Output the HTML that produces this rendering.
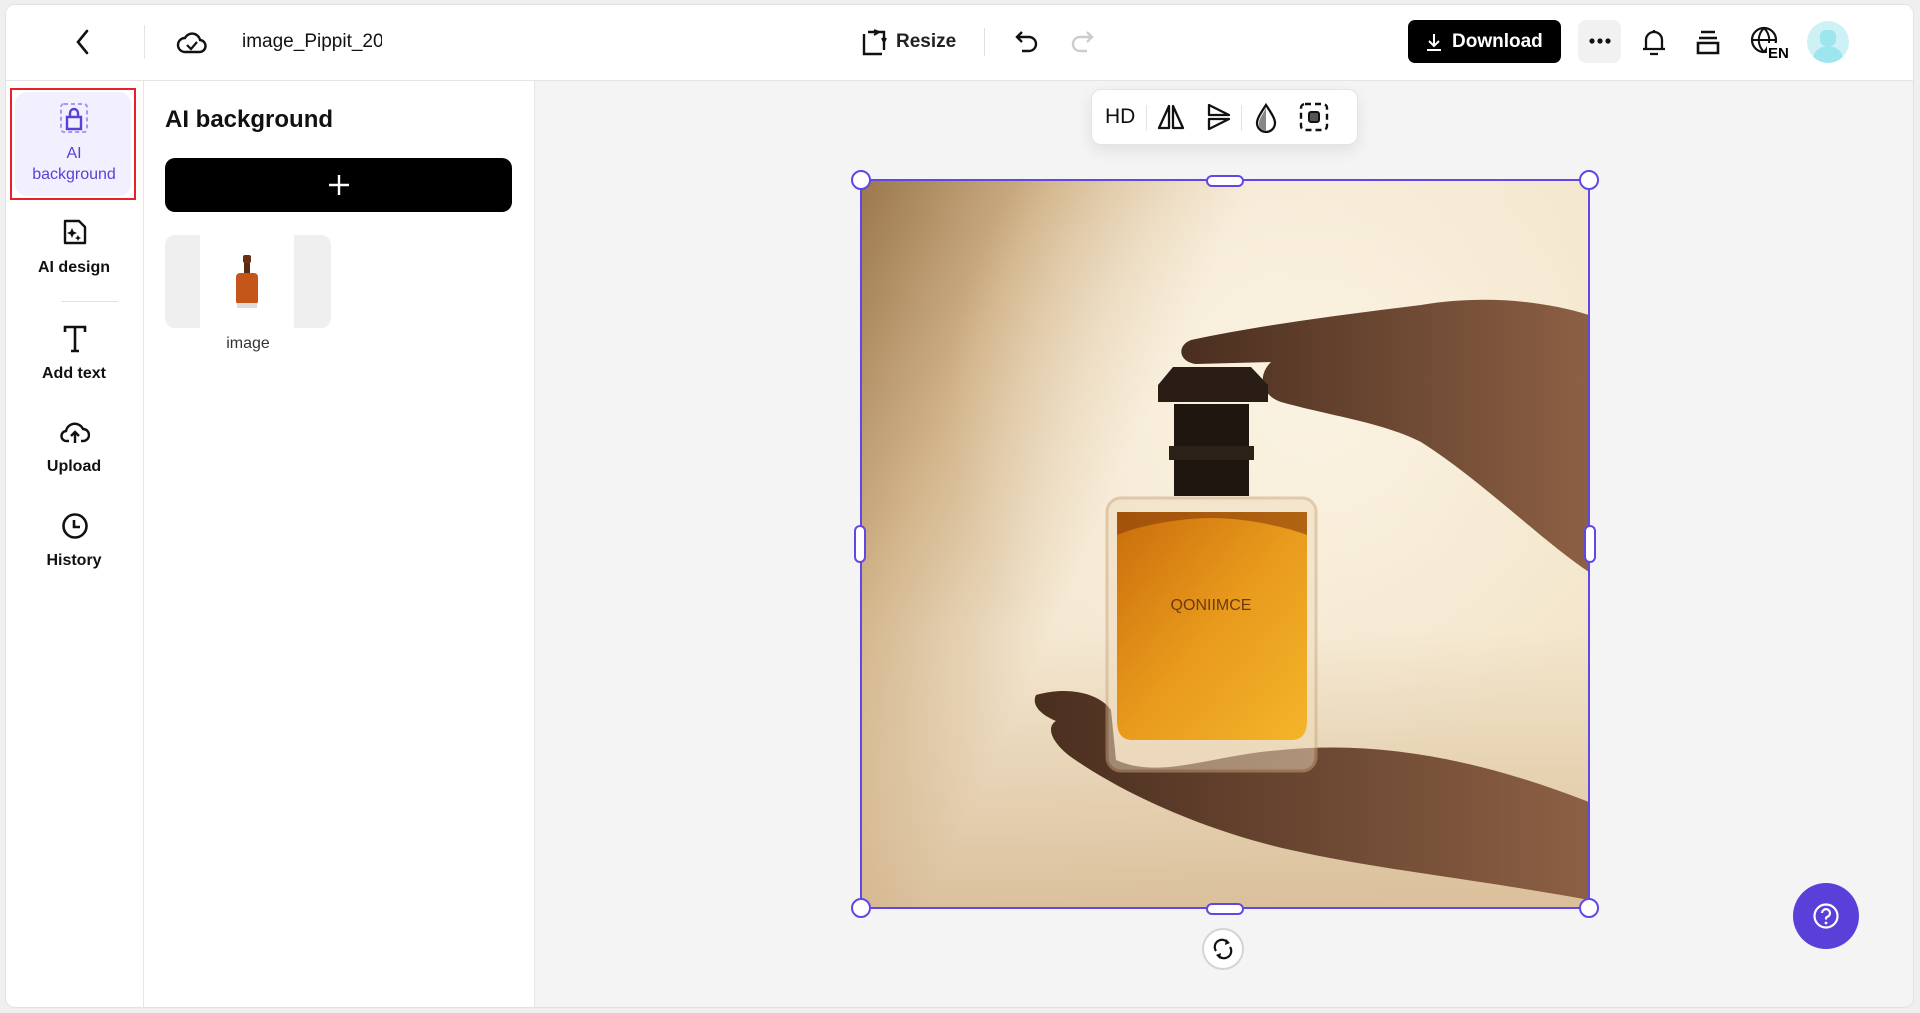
<!DOCTYPE html>
<html><head><meta charset="utf-8"><style>
*{box-sizing:border-box;margin:0;padding:0}
body{width:1920px;height:1013px;background:#efefef;font-family:"Liberation Sans",Arial,sans-serif;position:relative;overflow:hidden;color:#111}
.frame{position:absolute;left:5px;top:4px;width:1909px;height:1004px;background:#fff;border:1px solid #e2e2e2;border-radius:10px;overflow:hidden}
.abs{position:absolute}
.hdr{left:0;top:0;width:100%;height:76px;border-bottom:1px solid #e4e4e4;background:#fff}
.nav{left:0;top:76px;width:138px;bottom:0;border-right:1px solid #e6e6e6}
.panel{left:138px;top:76px;width:391px;bottom:0;border-right:1px solid #e6e6e6}
.canvas{left:529px;top:76px;right:0;bottom:0;background:#f4f4f4}
.lbl{position:absolute;left:0;width:138px;text-align:center;font-size:16px;font-weight:bold}
svg{display:block}
</style></head><body>
<div class="frame">
 <div class="abs hdr">
  <svg class="abs" style="left:67px;top:22px" width="20" height="30" viewBox="0 0 20 30"><path d="M14 4 L5 15 L14 26" fill="none" stroke="#111" stroke-width="2.6" stroke-linecap="round"/></svg>
  <div class="abs" style="left:138px;top:20px;width:1px;height:34px;background:#e4e4e4"></div>
  <svg class="abs" style="left:170px;top:22px" width="32" height="30" viewBox="0 0 32 30"><path d="M9 25 H23 A6 6 0 0 0 24 13 A8 8 0 0 0 9 11 A7 7 0 0 0 9 25Z" fill="none" stroke="#111" stroke-width="2.4"/><path d="M11 18 l4 4 l6 -7" fill="none" stroke="#111" stroke-width="2.2"/></svg>
  <div class="abs" style="left:236px;top:26px;font-size:19px;width:140px;overflow:hidden;white-space:nowrap">image_Pippit_20</div>
  <svg class="abs" style="left:854px;top:23px" width="28" height="30" viewBox="0 0 28 30"><path d="M4 6 V26 H22 M8 4 H24 V22" fill="none" stroke="#111" stroke-width="2.4"/><path d="M14 2 L19 4 L14 7 M22 10 L24 14 L26 10" fill="none" stroke="#111" stroke-width="2"/></svg>
  <div class="abs" style="left:890px;top:26px;font-size:19px;font-weight:bold;color:#222">Resize</div>
  <div class="abs" style="left:978px;top:23px;width:1px;height:28px;background:#e0e0e0"></div>
  <svg class="abs" style="left:1008px;top:23px" width="26" height="28" viewBox="0 0 26 28"><path d="M8 4 L3 9 L8 14 M3 9 H15 A7 7 0 0 1 15 23 H8" fill="none" stroke="#111" stroke-width="2.4"/></svg>
  <svg class="abs" style="left:1063px;top:23px" width="26" height="28" viewBox="0 0 26 28"><path d="M18 4 L23 9 L18 14 M23 9 H11 A7 7 0 0 0 11 23 H18" fill="none" stroke="#ccc" stroke-width="2.4"/></svg>
  <div class="abs" style="left:1402px;top:15px;width:153px;height:43px;background:#000;border-radius:7px;color:#fff;font-size:19px;font-weight:bold;line-height:43px;padding-left:44px">Download</div>
  <svg class="abs" style="left:1418px;top:27px" width="20" height="20" viewBox="0 0 20 20"><path d="M10 2 V14 M5 9 L10 14 L15 9 M3 18 H17" fill="none" stroke="#fff" stroke-width="2"/></svg>
  <div class="abs" style="left:1572px;top:15px;width:43px;height:43px;background:#f1f1f1;border-radius:8px"></div>
  <svg class="abs" style="left:1580px;top:32px" width="28" height="8" viewBox="0 0 28 8"><circle cx="6" cy="4" r="2.6" fill="#111"/><circle cx="14" cy="4" r="2.6" fill="#111"/><circle cx="22" cy="4" r="2.6" fill="#111"/></svg>
  <svg class="abs" style="left:1633px;top:21px" width="30" height="32" viewBox="0 0 30 32"><path d="M7 23 V14 A8 8 0 0 1 23 14 V23 H26 H4 Z M15 4 V6 M11 28 H19" fill="none" stroke="#111" stroke-width="2.3"/></svg>
  <svg class="abs" style="left:1688px;top:22px" width="28" height="30" viewBox="0 0 28 30"><path d="M7 5 H21 M5 11 H23 M4 16 H24 V26 H4 Z" fill="none" stroke="#111" stroke-width="2.6"/></svg>
  <svg class="abs" style="left:1742px;top:18px" width="40" height="38" viewBox="0 0 40 38"><circle cx="16" cy="17" r="12" fill="none" stroke="#111" stroke-width="2.2"/><path d="M4 17 H28 M16 5 C9 12 9 22 16 29 M16 5 C23 12 23 22 16 29" fill="none" stroke="#111" stroke-width="2"/><rect x="19" y="20" width="20" height="16" fill="#fff"/><text x="20" y="35" font-size="15" font-weight="bold" font-family="Liberation Sans">EN</text></svg>
  <div class="abs" style="left:1801px;top:16px;width:42px;height:42px;border-radius:50%;background:#cdf1f5;overflow:hidden"><div class="abs" style="left:13px;top:9px;width:16px;height:16px;border-radius:6px;background:#9de6ee"></div><div class="abs" style="left:6px;top:25px;width:30px;height:26px;border-radius:50%;background:#9de6ee"></div></div>
 </div>
 <div class="abs nav">
  <div class="abs" style="left:4px;top:7px;width:126px;height:112px;border:2px solid #e8202a"></div>
  <div class="abs" style="left:9px;top:11px;width:116px;height:104px;background:#f2efff;border-radius:12px"></div>
  <svg class="abs" style="left:53px;top:21px" width="30" height="32" viewBox="0 0 30 32"><rect x="2" y="2" width="26" height="28" rx="3" fill="none" stroke="#a897f2" stroke-width="2" stroke-dasharray="4 3"/><path d="M8 27 V15 H22 V27 Z M11 15 V11 A4 4 0 0 1 19 11 V15" fill="none" stroke="#5b3fd9" stroke-width="2.4"/></svg>
  <div class="lbl" style="left:-1px;top:62px;color:#5b3fd9;font-weight:normal;font-size:16px;line-height:21px">AI<br>background</div>
  <svg class="abs" style="left:56px;top:137px" width="26" height="28" viewBox="0 0 26 28"><path d="M3 3 H17 L23 9 V25 H3 Z" fill="none" stroke="#111" stroke-width="2.4" stroke-linejoin="round"/><path d="M10 10 l1.5 3.5 l3.5 1.5 l-3.5 1.5 l-1.5 3.5 l-1.5 -3.5 l-3.5 -1.5 l3.5 -1.5Z M16 17 l1 2 l2 1 l-2 1 l-1 2 l-1 -2 l-2 -1 l2 -1Z" fill="#111"/></svg>
  <div class="lbl" style="left:-1px;top:178px">AI design</div>
  <div class="abs" style="left:55px;top:220px;width:57px;height:1px;background:#e0e0e0"></div>
  <svg class="abs" style="left:56px;top:243px" width="26" height="30" viewBox="0 0 26 30"><path d="M3 8 V3 H23 V8 M13 3 V27 M9 27 H17" fill="none" stroke="#111" stroke-width="2.6"/></svg>
  <div class="lbl" style="left:-1px;top:284px">Add text</div>
  <svg class="abs" style="left:54px;top:338px" width="30" height="26" viewBox="0 0 30 26"><path d="M9 22 H7 A5 5 0 0 1 6 12 A9 9 0 0 1 23 10 A6 6 0 0 1 23 22 H21" fill="none" stroke="#111" stroke-width="2.4"/><path d="M15 24 V13 M11 17 L15 13 L19 17" fill="none" stroke="#111" stroke-width="2.4"/></svg>
  <div class="lbl" style="left:-1px;top:377px">Upload</div>
  <svg class="abs" style="left:55px;top:431px" width="28" height="28" viewBox="0 0 28 28"><circle cx="14" cy="14" r="11.5" fill="none" stroke="#111" stroke-width="2.6"/><path d="M13 8 V15 H19" fill="none" stroke="#111" stroke-width="2.6"/></svg>
  <div class="lbl" style="left:-1px;top:471px">History</div>
 </div>
 <div class="abs panel">
  <div class="abs" style="left:21px;top:25px;font-size:24px;font-weight:bold">AI background</div>
  <div class="abs" style="left:21px;top:77px;width:347px;height:54px;background:#000;border-radius:10px"></div>
  <svg class="abs" style="left:183px;top:92px" width="24" height="24" viewBox="0 0 24 24"><path d="M12 2 V22 M2 12 H22" stroke="#fff" stroke-width="2.4"/></svg>
  <div class="abs" style="left:21px;top:154px;width:166px;height:93px;background:#efefef;border-radius:10px"></div>
  <div class="abs" style="left:56px;top:154px;width:94px;height:93px;background:#fff"></div>
  <svg class="abs" style="left:87px;top:172px" width="32" height="60" viewBox="0 0 32 60"><rect x="12" y="2" width="8" height="8" rx="2" fill="#6b2e12"/><rect x="13" y="10" width="6" height="10" fill="#5a2a10"/><rect x="5" y="20" width="22" height="32" rx="4" fill="#c5561a"/><rect x="6" y="50" width="20" height="5" fill="#ddd"/></svg>
  <div class="abs" style="left:21px;top:254px;width:166px;text-align:center;font-size:16px;color:#333">image</div>
 </div>
 <div class="abs canvas">
  <div class="abs" style="left:556px;top:8px;width:267px;height:56px;background:#fff;border:1px solid #e4e4e4;border-radius:10px;box-shadow:0 6px 16px rgba(0,0,0,.08)"></div>
  <div class="abs" style="left:570px;top:24px;font-size:21px">HD</div>
  <div class="abs" style="left:611px;top:24px;width:1px;height:26px;background:#e4e4e4"></div>
  <svg class="abs" style="left:621px;top:21px" width="30" height="30" viewBox="0 0 30 30"><path d="M13 4 L3 26 H13 Z M17 4 L27 26 H17 Z" fill="none" stroke="#111" stroke-width="2.3" stroke-linejoin="round"/></svg>
  <svg class="abs" style="left:670px;top:21px" width="28" height="30" viewBox="0 0 28 30"><path d="M4 3 L24 13 H4 Z M4 17 H24 L4 27 Z" fill="none" stroke="#111" stroke-width="2.3" stroke-linejoin="round"/></svg>
  <div class="abs" style="left:706px;top:24px;width:1px;height:26px;background:#e4e4e4"></div>
  <svg class="abs" style="left:717px;top:21px" width="28" height="32" viewBox="0 0 28 32"><path d="M14 3 C8 12 5 17 5 21 A9 9 0 0 0 23 21 C23 17 20 12 14 3Z" fill="none" stroke="#111" stroke-width="2.3"/><path d="M14 6 V29 A7 7 0 0 1 7 21 C7 17 11 12 14 6Z" fill="#888"/></svg>
  <svg class="abs" style="left:764px;top:21px" width="30" height="30" viewBox="0 0 30 30"><rect x="2" y="2" width="26" height="26" rx="4" fill="none" stroke="#111" stroke-width="2.4" stroke-dasharray="6 4"/><rect x="10" y="10" width="10" height="10" rx="2" fill="#555" stroke="#111" stroke-width="2"/></svg>
  <!-- image -->
  <svg class="abs" style="left:326px;top:99px" width="728" height="728" viewBox="0 0 728 728">
   <defs>
    <linearGradient id="bg" x1="0" y1="0" x2="1" y2="0.45"><stop offset="0" stop-color="#9b774d"/><stop offset="0.22" stop-color="#d2b48a"/><stop offset="0.45" stop-color="#f4e8d2"/><stop offset="1" stop-color="#f3e6cc"/></linearGradient>
    <radialGradient id="glow" cx="0.62" cy="0.3" r="0.5"><stop offset="0" stop-color="#fbf4e4" stop-opacity=".9"/><stop offset="1" stop-color="#fbf3e2" stop-opacity="0"/></radialGradient>
    <linearGradient id="bot" x1="0" y1="0" x2="0" y2="1"><stop offset="0" stop-color="#c6a070" stop-opacity="0"/><stop offset="1" stop-color="#c6a070" stop-opacity=".55"/></linearGradient>
    <linearGradient id="amber" x1="0" y1="0" x2="1" y2="1"><stop offset="0" stop-color="#c96d0c"/><stop offset="0.5" stop-color="#e89a1c"/><stop offset="1" stop-color="#f4b52a"/></linearGradient>
    <linearGradient id="hand" x1="0" y1="0" x2="1" y2="0"><stop offset="0" stop-color="#4a2e1f"/><stop offset="1" stop-color="#8c6044"/></linearGradient>
   </defs>
   <rect width="728" height="728" fill="url(#bg)"/>
   <rect width="728" height="728" fill="url(#glow)"/>
   <rect y="450" width="728" height="278" fill="url(#bot)"/>
   <path d="M728 135 C680 120 620 115 560 125 C480 135 400 145 330 160 C315 166 318 182 335 184 L410 182 C396 196 400 215 420 222 C470 236 520 242 560 262 C620 300 680 360 728 392 Z" fill="url(#hand)"/>
   <path d="M175 515 C210 505 240 515 250 530 L255 580 C300 600 350 575 420 570 C520 560 620 580 728 622 L728 720 C620 700 520 690 430 670 C340 650 260 612 210 577 C190 562 185 547 195 541 C180 535 170 525 175 515Z" fill="url(#hand)"/>
   <rect x="246" y="318" width="209" height="273" rx="14" fill="#f0dcc0" opacity=".5" stroke="#c9a57c" stroke-width="3"/>
   <path d="M256 332 H446 V540 C446 555 440 560 430 560 H272 C262 560 256 555 256 540Z" fill="url(#amber)"/>
   <path d="M256 332 H446 V355 C420 345 380 338 350 338 C320 338 280 345 256 355Z" fill="#8a3f0a" opacity=".6"/>
   <rect x="313" y="224" width="75" height="92" fill="#1f1610"/>
   <rect x="308" y="266" width="85" height="14" fill="#2d2017"/>
   <path d="M297 205 L312 187 H390 L407 205 V222 H297Z" fill="#2a1d15"/>
   <text x="350" y="430" text-anchor="middle" font-size="16" fill="#6b3a12" font-family="Liberation Sans">QONIIMCE</text>
  </svg>
  <!-- selection -->
  <div class="abs" style="left:325px;top:98px;width:730px;height:730px;border:2px solid #6047e6"></div>
  <div class="abs" style="left:316px;top:89px;width:20px;height:20px;border-radius:50%;background:#fff;border:2px solid #6047e6"></div>
  <div class="abs" style="left:1044px;top:89px;width:20px;height:20px;border-radius:50%;background:#fff;border:2px solid #6047e6"></div>
  <div class="abs" style="left:316px;top:817px;width:20px;height:20px;border-radius:50%;background:#fff;border:2px solid #6047e6"></div>
  <div class="abs" style="left:1044px;top:817px;width:20px;height:20px;border-radius:50%;background:#fff;border:2px solid #6047e6"></div>
  <div class="abs" style="left:671px;top:94px;width:38px;height:12px;border-radius:6px;background:#fff;border:2px solid #6047e6"></div>
  <div class="abs" style="left:671px;top:822px;width:38px;height:12px;border-radius:6px;background:#fff;border:2px solid #6047e6"></div>
  <div class="abs" style="left:319px;top:444px;width:12px;height:38px;border-radius:6px;background:#fff;border:2px solid #6047e6"></div>
  <div class="abs" style="left:1049px;top:444px;width:12px;height:38px;border-radius:6px;background:#fff;border:2px solid #6047e6"></div>
  <div class="abs" style="left:667px;top:847px;width:42px;height:42px;border-radius:50%;background:#fff;border:2px solid #d4d4d4"></div>
  <svg class="abs" style="left:676px;top:856px" width="24" height="24" viewBox="0 0 24 24"><path d="M5 14 A7 7 0 0 1 17 6 M19 10 A7 7 0 0 1 7 18" fill="none" stroke="#111" stroke-width="2.2"/><path d="M15 2 L19 6 L14 8 M9 22 L5 18 L10 16" fill="#111"/></svg>
  <div class="abs" style="left:1258px;top:802px;width:66px;height:66px;border-radius:50%;background:#5b3fd9"></div>
  <svg class="abs" style="left:1277px;top:821px" width="28" height="28" viewBox="0 0 28 28"><circle cx="14" cy="14" r="11.5" fill="none" stroke="#fff" stroke-width="2.2"/><path d="M10 11 A4 4 0 1 1 15 15 C14 15.5 14 16 14 17.5" fill="none" stroke="#fff" stroke-width="2.2"/><circle cx="14" cy="21" r="1.4" fill="#fff"/></svg>
 </div>
</div>
</body></html>
